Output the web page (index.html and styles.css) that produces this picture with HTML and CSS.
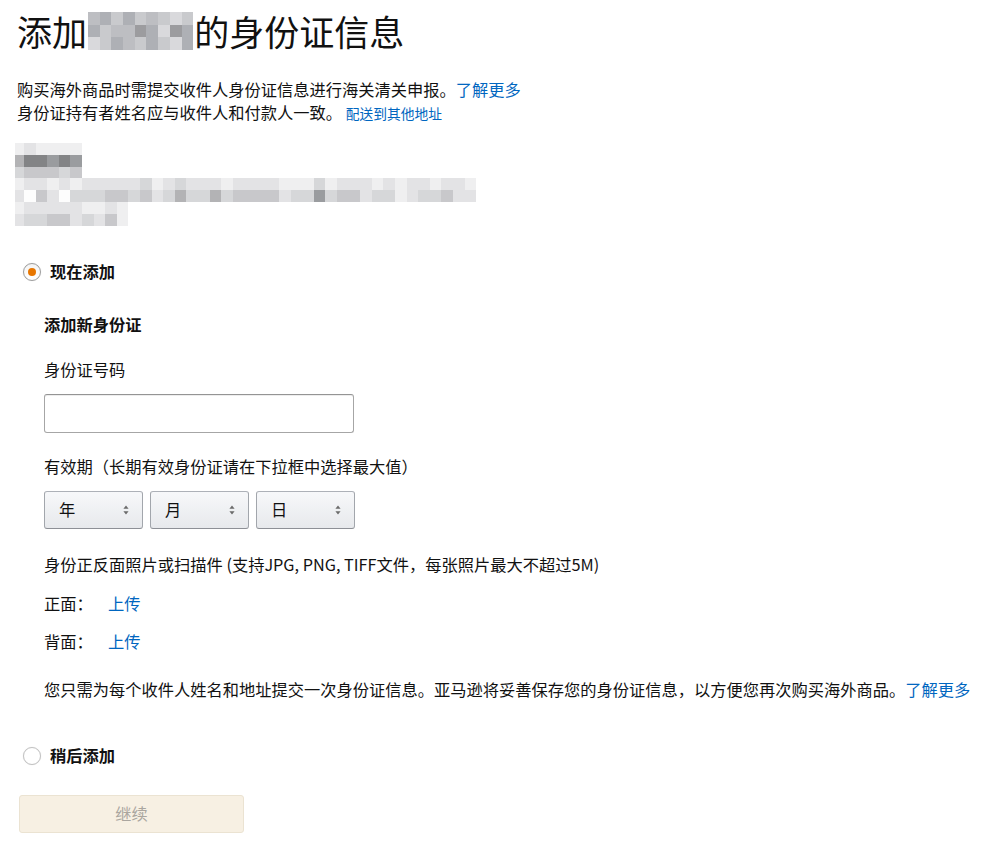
FILE: index.html
```html
<!DOCTYPE html>
<html lang="zh-CN">
<head>
<meta charset="utf-8">
<title>添加身份证信息</title>
<link rel="stylesheet" href="styles.css">
</head>
<body>
<div class="page">
  <h1 class="title">添加<span class="blur-name"><i class="g3"></i><i class="g4"></i><i class="g2"></i><i class="g4"></i><i class="g2"></i><i class="g3"></i><i class="g2"></i><i class="g1"></i><i class="g2"></i><i class="g4"></i><i class="g2"></i><i class="g3"></i><i class="g3"></i><i class="g5"></i><i class="g4"></i><i class="g1"></i><i class="g5"></i><i class="g4"></i><i class="g1"></i><i class="g2"></i><i class="g4"></i><i class="g3"></i><i class="g2"></i><i class="g4"></i><i class="g2"></i><i class="g1"></i><i class="g4"></i></span>的身份证信息</h1>

  <p class="intro">购买海外商品时需提交收件人身份证信息进行海关清关申报。<a href="#" class="link">了解更多</a><br>身份证持有者姓名应与收件人和付款人一致。 <a href="#" class="link small">配送到其他地址</a></p>

  <div class="address">
    <div class="px-row w-name"><i class="p0"></i><i class="p1"></i><i class="p0"></i><i class="p0"></i><i class="p0"></i><i class="p0"></i></div>
    <div class="px-row w-name"><i class="p4"></i><i class="p6"></i><i class="p6"></i><i class="p5"></i><i class="p6"></i><i class="p5"></i></div>
    <div class="px-row w-name"><i class="p2"></i><i class="p3"></i><i class="p3"></i><i class="p3"></i><i class="p2"></i><i class="p3"></i></div>
    <div class="px-row"><i class="p0"></i><i class="p1"></i><i class="p1"></i><i class="p0"></i><i class="p1"></i><i class="p0"></i><i class="p1"></i><i class="p1"></i><i class="p1"></i><i class="p1"></i><i class="p1"></i><i class="p2"></i><i class="p0"></i><i class="p1"></i><i class="p2"></i><i class="p1"></i><i class="p1"></i><i class="p1"></i><i class="p0"></i><i class="p1"></i><i class="p1"></i><i class="p1"></i><i class="p1"></i><i class="p0"></i><i class="p0"></i><i class="p0"></i><i class="p2"></i><i class="p0"></i><i class="p1"></i><i class="p1"></i><i class="p1"></i><i class="p0"></i><i class="p1"></i><i class="p0"></i><i class="p1"></i><i class="p1"></i><i class="p0"></i><i class="p1"></i><i class="p1"></i><i class="p0"></i></div>
    <div class="px-row"><i class="p1"></i><i class="p00"></i><i class="p3"></i><i class="p1"></i><i class="p00"></i><i class="p2"></i><i class="p2"></i><i class="p2"></i><i class="p3"></i><i class="p3"></i><i class="p2"></i><i class="p3"></i><i class="p1"></i><i class="p2"></i><i class="p4"></i><i class="p2"></i><i class="p2"></i><i class="p4"></i><i class="p2"></i><i class="p3"></i><i class="p3"></i><i class="p3"></i><i class="p3"></i><i class="p1"></i><i class="p2"></i><i class="p2"></i><i class="p5"></i><i class="p2"></i><i class="p3"></i><i class="p3"></i><i class="p1"></i><i class="p2"></i><i class="p2"></i><i class="p0"></i><i class="p1"></i><i class="p2"></i><i class="p2"></i><i class="p3"></i><i class="p1"></i><i class="p1"></i></div>
    <div class="px-row w-short"><i class="p0"></i><i class="p1"></i><i class="p1"></i><i class="p1"></i><i class="p1"></i><i class="p1"></i><i class="p0"></i><i class="p0"></i><i class="p1"></i><i class="p0"></i></div>
    <div class="px-row w-short"><i class="p1"></i><i class="p2"></i><i class="p2"></i><i class="p3"></i><i class="p3"></i><i class="p1"></i><i class="p2"></i><i class="p1"></i><i class="p3"></i><i class="p0"></i></div>
  </div>

  <label class="radio-row">
    <span class="radio checked"></span>
    <span class="radio-label">现在添加</span>
  </label>

  <div class="form">
    <h2 class="section-title">添加新身份证</h2>

    <div class="field-label label-id">身份证号码</div>
    <div class="text-input"></div>

    <div class="field-label label-exp">有效期（长期有效身份证请在下拉框中选择最大值）</div>
    <div class="selects">
      <div class="select">年<span class="arrows"><svg width="6" height="10" viewBox="0 0 6 10"><path d="M3 0.5 L5.6 3.8 H0.4 Z M3 9.5 L5.6 6.2 H0.4 Z" fill="#6b6b6b"/></svg></span></div>
      <div class="select">月<span class="arrows"><svg width="6" height="10" viewBox="0 0 6 10"><path d="M3 0.5 L5.6 3.8 H0.4 Z M3 9.5 L5.6 6.2 H0.4 Z" fill="#6b6b6b"/></svg></span></div>
      <div class="select">日<span class="arrows"><svg width="6" height="10" viewBox="0 0 6 10"><path d="M3 0.5 L5.6 3.8 H0.4 Z M3 9.5 L5.6 6.2 H0.4 Z" fill="#6b6b6b"/></svg></span></div>
    </div>

    <div class="field-label label-photo">身份正反面照片或扫描件 (支持JPG, PNG, TIFF文件，每张照片最大不超过5M)</div>
    <div class="upload-row first"><span class="upload-name">正面：</span><a href="#" class="link">上传</a></div>
    <div class="upload-row"><span class="upload-name">背面：</span><a href="#" class="link">上传</a></div>

    <p class="note">您只需为每个收件人姓名和地址提交一次身份证信息。亚马逊将妥善保存您的身份证信息，以方便您再次购买海外商品。<a href="#" class="link">了解更多</a></p>
  </div>

  <label class="radio-row later">
    <span class="radio"></span>
    <span class="radio-label">稍后添加</span>
  </label>

  <div class="button-disabled">继续</div>
</div>
</body>
</html>
```

FILE: styles.css
```css
* { box-sizing: border-box; }

body {
  margin: 0;
  background: #fff;
  color: #111;
  font-family: "Noto Sans CJK SC", "Liberation Sans", sans-serif;
  font-size: 16.25px;
}

.page {
  padding: 0 0 0 17px;
}

.link {
  color: #0066c0;
  text-decoration: none;
}

.link.small {
  font-size: 13.75px;
}

.title {
  margin: 10px 0 0;
  font-size: 35px;
  font-weight: 400;
  line-height: 42px;
  color: #111;
  display: flex;
  align-items: center;
}

.blur-name {
  display: inline-grid;
  grid-template-columns: repeat(9, 11.7px);
  grid-auto-rows: 12.7px;
  margin: 0 1px 0 1px;
}

.blur-name i { display: block; }
.g1 { background: #d9d9dc; }
.g2 { background: #c9cacd; }
.g3 { background: #bdbec2; }
.g4 { background: #aeb0b5; }
.g5 { background: #9c9c9f; }

.intro {
  margin: 26px 0 0;
  line-height: 23px;
}

.address {
  margin: 18px 0 0 -2px;
  display: flex;
  flex-direction: column;
}

.px-row {
  display: flex;
  height: 11.8px;
}

.px-row i {
  display: block;
  width: 11.6px;
  height: 100%;
}

.px-row i:first-child { width: 9px; }

.p00 { background: #fdfdfd; }
.p0 { background: #efeff0; }
.p1 { background: #e3e3e5; }
.p2 { background: #d6d7d9; }
.p3 { background: #c8c8cb; }
.p4 { background: #b3b3b5; }
.p5 { background: #9a9c9f; }
.p6 { background: #838486; }

.radio-row {
  display: flex;
  align-items: center;
  height: 24px;
  margin: 34px 0 0 6px;
}

.radio {
  width: 18px;
  height: 18px;
  border-radius: 50%;
  border: 1px solid #9c9c9c;
  background: linear-gradient(#f4f4f4, #fff);
  box-shadow: 0 0 1px rgba(0,0,0,0.15);
  display: flex;
  align-items: center;
  justify-content: center;
  flex: none;
}

.radio.checked::after {
  content: "";
  width: 8px;
  height: 8px;
  border-radius: 50%;
  background: #e77600;
}

.radio:not(.checked) {
  border-color: #c2c2c2;
  background: #fff;
}

.radio-label {
  margin-left: 9px;
  font-weight: 700;
  font-size: 16.25px;
  position: relative;
  top: -1px;
}

.form {
  margin-left: 27px;
}

.section-title {
  margin: 28px 0 0;
  font-size: 16.25px;
  font-weight: 700;
  line-height: 24px;
}

.field-label {
  line-height: 24px;
}

.label-id { margin-top: 21px; }
.label-exp { margin-top: 21px; }
.label-photo { margin-top: 23px; }

.text-input {
  margin-top: 13px;
  width: 310px;
  height: 39px;
  border: 1px solid #a6a6a6;
  border-top-color: #949494;
  border-radius: 3px;
  box-shadow: 0 1px 0 rgba(255,255,255,.5), 0 1px 0 rgba(0,0,0,.07) inset;
  background: #fff;
}

.selects {
  margin-top: 13px;
  display: flex;
  gap: 7px;
}

.select {
  width: 99px;
  height: 38px;
  border: 1px solid #adb1b8;
  border-color: #adb1b8 #a2a6ac #8d9096;
  border-radius: 3px;
  background: linear-gradient(#f7f8fa, #e7e9ec);
  display: flex;
  align-items: center;
  padding: 0 0 2px 14px;
  position: relative;
  font-size: 16.25px;
}

.arrows {
  position: absolute;
  right: 13px;
  top: 50%;
  transform: translateY(-50%);
  display: flex;
}

.upload-row {
  margin-top: 14px;
  line-height: 24px;
  display: flex;
}

.upload-row.first {
  margin-top: 15px;
}

.upload-name {
  width: 64px;
}

.note {
  margin: 24px 0 0;
  line-height: 24px;
  white-space: nowrap;
}

.radio-row.later {
  margin-top: 43px;
}

.button-disabled {
  margin: 27px 0 0 2px;
  width: 225px;
  height: 38px;
  border: 1px solid #ebe3d2;
  border-radius: 3px;
  background: #f7f0e3;
  color: #aaa69f;
  display: flex;
  align-items: center;
  justify-content: center;
  font-size: 16.25px;
  padding-bottom: 2px;
}
```
